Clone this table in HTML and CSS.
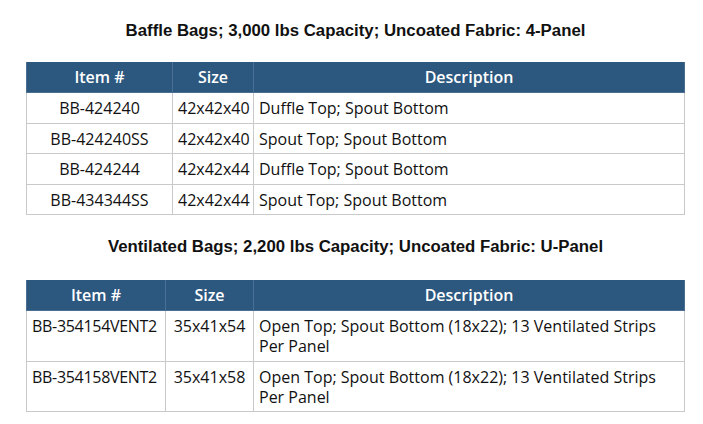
FILE: index.html
```html
<!DOCTYPE html>
<html>
<head>
<meta charset="utf-8">
<link rel="stylesheet" href="styles.css">
</head>
<body>
<div class="page">
  <h2 class="title title-first">Baffle Bags; 3,000 lbs Capacity; Uncoated Fabric: 4-Panel</h2>
  <table class="spec spec-a">
    <colgroup><col class="c1"><col class="c2"><col></colgroup>
    <thead>
      <tr><th>Item #</th><th>Size</th><th>Description</th></tr>
    </thead>
    <tbody>
      <tr><td class="ctr">BB-424240</td><td class="ctr">42x42x40</td><td>Duffle Top; Spout Bottom</td></tr>
      <tr><td class="ctr">BB-424240SS</td><td class="ctr">42x42x40</td><td>Spout Top; Spout Bottom</td></tr>
      <tr><td class="ctr">BB-424244</td><td class="ctr">42x42x44</td><td>Duffle Top; Spout Bottom</td></tr>
      <tr><td class="ctr">BB-434344SS</td><td class="ctr">42x42x44</td><td>Spout Top; Spout Bottom</td></tr>
    </tbody>
  </table>
  <h2 class="title title-second">Ventilated Bags; 2,200 lbs Capacity; Uncoated Fabric: U-Panel</h2>
  <table class="spec spec-b">
    <colgroup><col class="c1"><col class="c2"><col></colgroup>
    <thead>
      <tr><th>Item #</th><th>Size</th><th>Description</th></tr>
    </thead>
    <tbody>
      <tr><td class="code">BB-354154VENT2</td><td class="ctr">35x41x54</td><td>Open Top; Spout Bottom (18x22); 13 Ventilated Strips Per Panel</td></tr>
      <tr><td class="code">BB-354158VENT2</td><td class="ctr">35x41x58</td><td>Open Top; Spout Bottom (18x22); 13 Ventilated Strips Per Panel</td></tr>
    </tbody>
  </table>
</div>
</body>
</html>
```
FILE: styles.css
```css
html, body {
  margin: 0;
  padding: 0;
  background: #ffffff;
}
.page {
  width: 659px;
  margin-left: 26px;
  padding-top: 21px;
}
.title {
  font-family: "Liberation Sans", Arial, sans-serif;
  font-weight: bold;
  font-size: 16.8px;
  line-height: 20px;
  color: #111111;
  text-align: center;
  margin: 0;
}
.title-first { margin-bottom: 21px; }
.title-second { margin-top: 22px; margin-bottom: 23px; }
.spec {
  width: 659px;
  border-collapse: collapse;
  table-layout: fixed;
  font-family: "Open Sans", sans-serif;
  font-size: 16px;
  color: #111111;
}
.spec th {
  background: #2c5880;
  color: #ffffff;
  font-weight: 600;
  height: 30px;
  padding: 0 5px;
  border: 1px solid #4a6f92;
  border-top: none;
  text-align: center;
}
.spec td {
  border: 1px solid #c9c9c9;
  padding: 5px 5px 4.5px 5px;
  line-height: 20px;
  vertical-align: top;
  text-align: left;
}
.spec td.ctr { text-align: center; }
.spec td.code {
  white-space: nowrap;
  letter-spacing: -0.3px;
  padding-left: 5px;
  padding-right: 0;
}
.spec-a .c1 { width: 146px; }
.spec-a .c2 { width: 81px; }
.spec-b .c1 { width: 139px; }
.spec-b .c2 { width: 88px; }
```
